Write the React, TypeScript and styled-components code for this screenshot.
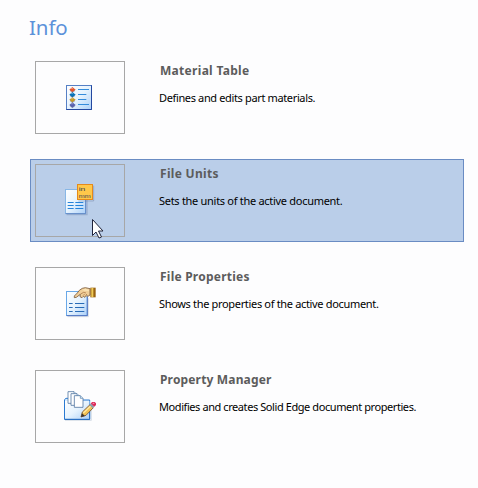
import React from 'react';
import styled, { createGlobalStyle } from 'styled-components';

const GlobalStyle = createGlobalStyle`
  body { margin: 0; background: #fdfdfe; overflow: hidden; }
`;

const Page = styled.main`
  box-sizing: border-box;
  width: 478px;
  height: 488px;
  padding: 13px 14px 0 30px;
  font-family: 'Noto Sans', sans-serif;
`;

const Heading = styled.h1`
  margin: 0 0 15px -1px;
  height: 28px;
  font-size: 20.5px;
  line-height: 28px;
  font-weight: 400;
  letter-spacing: -0.1px;
  color: #5c92da;
`;

const List = styled.div`
  display: flex;
  flex-direction: column;
  gap: 20px;
`;

const Row = styled.section<{ $active?: boolean }>`
  box-sizing: border-box;
  position: relative;
  display: flex;
  gap: 34px;
  height: 83px;
  padding: 4px;
  border: 1px solid ${(p) => (p.$active ? '#6a8cc3' : 'transparent')};
  background: ${(p) => (p.$active ? '#bacee9' : 'transparent')};
`;

const IconFrame = styled.div`
  box-sizing: border-box;
  width: 90px;
  height: 73px;
  border: 1px solid #a7a7a7;
  display: flex;
  align-items: center;
  justify-content: center;
  flex: none;
`;

const Copy = styled.div`
  display: flex;
  flex-direction: column;
  white-space: nowrap;
`;

const Title = styled.h2<{ $spacing: number }>`
  margin: 1px 0 0 1px;
  font-size: 12px;
  line-height: 18px;
  font-weight: 700;
  letter-spacing: ${(p) => p.$spacing}px;
  color: #5c5c5c;
`;

const Description = styled.p<{ $spacing: number }>`
  margin: 10px 0 0;
  font-size: 11px;
  line-height: 16px;
  letter-spacing: ${(p) => p.$spacing}px;
  color: #000;
`;

const Pointer = styled.svg`
  position: absolute;
  left: 60px;
  top: 58px;
`;

const UnitLabel = styled.text`
  font: 400 17px 'Liberation Sans', sans-serif;
  fill: #3d4553;
`;

const Defs = ({ id }: { id: string }) => (
  <defs>
    <linearGradient id={id} x1="0" y1="0" x2="1" y2="1">
      <stop offset="0" stopColor="#ffffff" />
      <stop offset="0.5" stopColor="#e6f3fe" />
      <stop offset="1" stopColor="#acd0f8" />
    </linearGradient>
  </defs>
);

const MaterialIcon = () => (
  <svg width="50" height="45" viewBox="0 0 150 135">
    <Defs id="material" />
    <rect x="34.5" y="31.5" width="75" height="72" fill="url(#material)" stroke="#5680c5" strokeWidth="3" />
    <path d="M109.500 31V103.500H34" fill="none" stroke="#2448a0" strokeWidth="3" />
    {['#e4552c', '#0872b8', '#c79a24', '#5961ae'].map((color, i) => {
      const y = 44 + i * 15.3;
      const lineY = [43.5, 58.5, 73.5, 88.5][i];
      return (
        <g key={color}>
          <path d={`M43 ${y}L52 ${y - 8}L62 ${y}L52 ${y + 8}Z`} fill={color} />
          <path d={`M45 ${y + 3}l7 5l8-5`} fill="none" stroke="#393e64" strokeOpacity="0.35" strokeWidth="3" />
          <path d={`M49 ${y - 2}h4v-3h-4z`} fill="#fff" fillOpacity="0.5" />
          <path d={`M69 ${lineY}H${i % 3 === 0 ? 102 : 94}`} stroke="#358cdb" strokeWidth="3" />
        </g>
      );
    })}
  </svg>
);

const UnitsIcon = () => (
  <svg width="50" height="45" viewBox="0 9 150 135">
    <Defs id="units" />
    <path d="M35 119H96V59" fill="none" stroke="#607ba5" strokeOpacity="0.35" strokeWidth="4" />
    <rect x="31.500" y="43.500" width="60" height="72" fill="url(#units)" stroke="#88b7e6" strokeWidth="3" />
    <path d="M92 74V116H32" fill="none" stroke="#6389c7" strokeWidth="3" />
    <path d="M38 82.500H56M61 82.500H85M38 91.500H56M61 91.500H85M38 100.500H56M61 100.500H85" stroke="#2684da" strokeWidth="3" />
    <path d="M70 78H116V32" fill="none" stroke="#66799b" strokeOpacity="0.4" strokeWidth="3" />
    <rect x="67.500" y="28.500" width="45" height="45" fill="#ffc84a" stroke="#e58a1b" strokeWidth="3" />
    <UnitLabel x="71" y="49" textLength="20" lengthAdjust="spacingAndGlyphs">in</UnitLabel>
    <UnitLabel x="71" y="69" textLength="36" lengthAdjust="spacingAndGlyphs">mm</UnitLabel>
  </svg>
);

const PropertiesIcon = () => (
  <svg width="50" height="45" viewBox="0 3 150 135">
    <Defs id="properties" />
    <path d="M38 110H100V55" fill="none" stroke="#aab5c5" strokeOpacity="0.45" strokeWidth="3" />
    <rect x="34.500" y="34.500" width="62" height="72" fill="url(#properties)" stroke="#69a8e8" strokeWidth="3" />
    <path d="M97 50V107H35" fill="none" stroke="#5575c0" strokeWidth="3" />
    <path d="M42 70.500H53M60 70.500H88M42 82.500H53M60 82.500H88M42 94.500H53M60 94.500H88" stroke="#286bb7" strokeWidth="3" />
    <path d="M105 26L91 23L82 25L73 31L67 39L58 48V53L64 52L76 43L75 50L81 53L85 49L90 52L95 47L99 49L105 45Z" fill="#f0ce98" stroke="#7a5a3c" strokeWidth="2.500" />
    <path d="M77 42L86 37L93 39M84 47L89 42M91 47L96 42" fill="none" stroke="#a06a3b" strokeWidth="2" />
    <path d="M82 29L91 26L102 29V34L87 32Z" fill="#fae2b3" />
    <path d="M106 23H122V52H106Z" fill="#996311" />
    <path d="M109 24H115V51H109Z" fill="#efca57" />
  </svg>
);

const ManagerIcon = () => (
  <svg width="50" height="45" viewBox="0 3 150 135">
    <Defs id="manager" />
    <path d="M30 112H109V66" fill="none" stroke="#a8b7cc" strokeOpacity="0.45" strokeWidth="3" />
    <path d="M28.500 109V50L33 46H43L48 51H104V109Z" fill="#d8ecfe" stroke="#2a7ad2" strokeWidth="3" />
    <path d="M30 54H103V107H30Z" fill="url(#manager)" />
    {[[39, 26], [48, 32], [58, 38]].map(([x, y]) => (
      <g key={x}>
        <path d={`M${x} ${y}H${x + 18}L${x + 26} ${y + 8}V${y + 35}H${x}Z`} fill="#fff" stroke="#587ba5" strokeWidth="2.500" />
        <path d={`M${x + 18} ${y}V${y + 8}H${x + 26}`} fill="#cbe7fb" stroke="#587ba5" strokeWidth="2" />
      </g>
    ))}
    <path d="M29 109H104V75" fill="none" stroke="#2369bd" strokeWidth="3" />
    <path d="M78 102L82 87L105 65L115 74L93 97Z" fill="#f2c255" stroke="#75502e" strokeWidth="2.500" />
    <path d="M85 90L107 69" stroke="#ffe9a1" strokeWidth="4" />
    <path d="M78 102L81 91L90 99Z" fill="#3c3530" />
    <path d="M103 66L108 61L118 70L113 76Z" fill="#90a1ad" />
    <path d="M107 61L112 57H119L123 61V66L118 71Z" fill="#db2858" />
    <path d="M113 61H118" stroke="#ff9cb8" strokeWidth="3" />
  </svg>
);

const items = [
  { title: 'Material Table', description: 'Defines and edits part materials.', Icon: MaterialIcon, ts: 0.3, ds: -0.36 },
  { title: 'File Units', description: 'Sets the units of the active document.', Icon: UnitsIcon, ts: 0.3, ds: -0.29 },
  { title: 'File Properties', description: 'Shows the properties of the active document.', Icon: PropertiesIcon, ts: 0.23, ds: -0.33 },
  { title: 'Property Manager', description: 'Modifies and creates Solid Edge document properties.', Icon: ManagerIcon, ts: 0.16, ds: -0.42 },
];

const activeTitle = 'File Units';

export default function App() {
  return (
    <>
      <GlobalStyle />
      <Page>
        <Heading>Info</Heading>
        <List>
          {items.map(({ title, description, Icon, ts, ds }) => (
            <Row key={title} $active={title === activeTitle}>
              <IconFrame><Icon /></IconFrame>
              <Copy>
                <Title $spacing={ts}>{title}</Title>
                <Description $spacing={ds}>{description}</Description>
              </Copy>
              {title === activeTitle && (
                <Pointer width="13" height="21" viewBox="0 0 13 21">
                  <path d="M1.500 1.500V17.500L5 14L8 20L10.500 19L7.500 13H12Z" fill="#fff" stroke="#20243b" strokeWidth="1" />
                </Pointer>
              )}
            </Row>
          ))}
        </List>
      </Page>
    </>
  );
}
